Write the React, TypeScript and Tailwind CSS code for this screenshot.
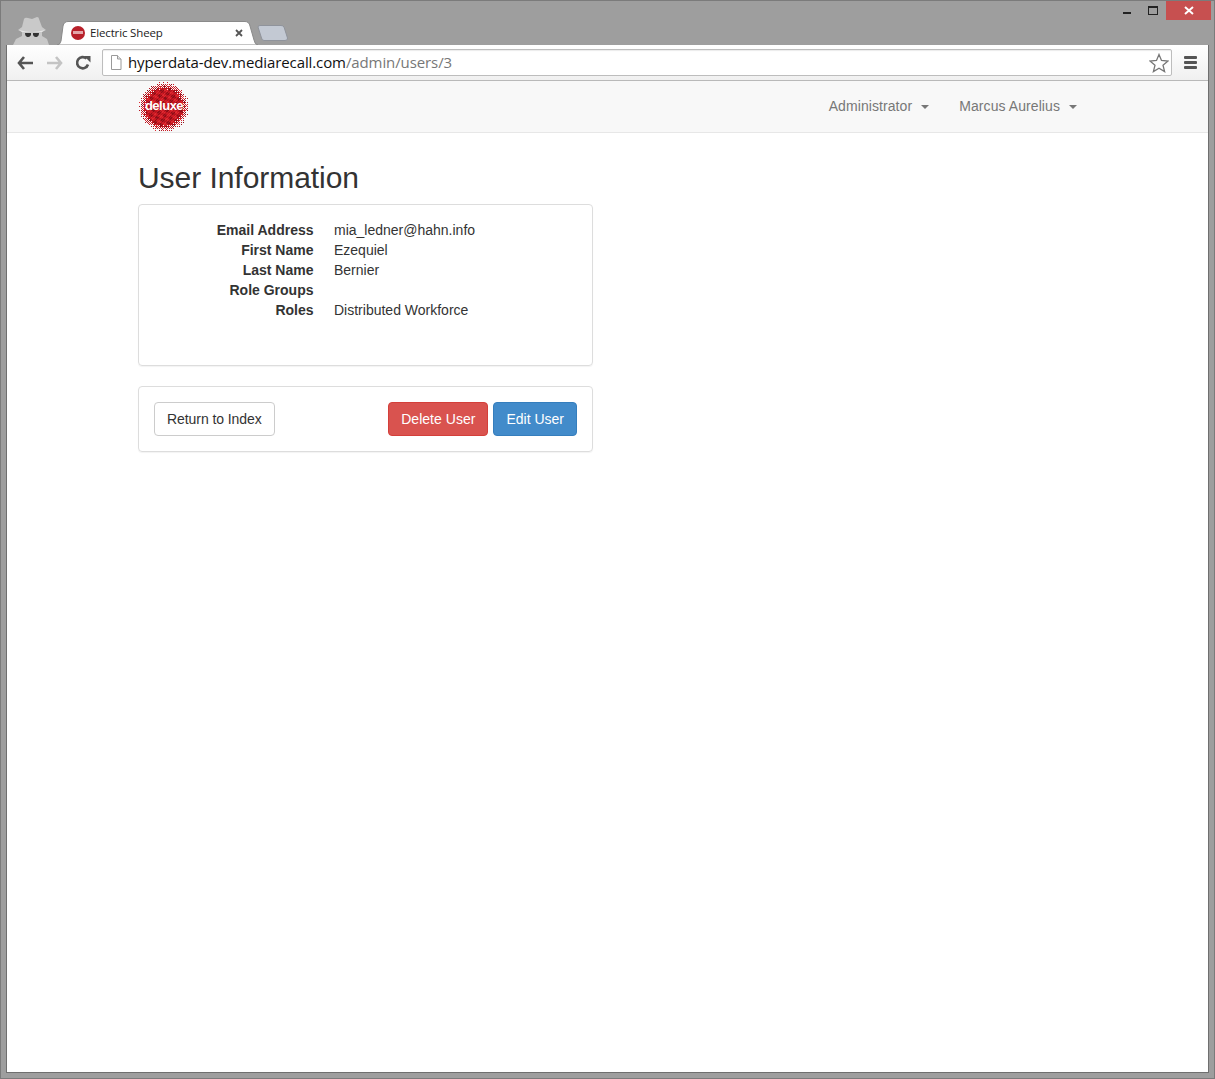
const bayer = [
  [0, 8, 2, 10],
  [12, 4, 14, 6],
  [3, 11, 1, 9],
  [15, 7, 13, 5],
];

// halftone disc: ordered dither thins the pixels out towards the rim
const dots: { x: number; y: number; c: string }[] = [];
for (let y = 0; y < 50; y++) {
  for (let x = 0; x < 50; x++) {
    const d = Math.hypot(x + 0.5 - 25, y + 0.5 - 25);
    const cover = Math.min(1, (25.5 - d) / 8);
    if (cover <= 0 || (bayer[y % 4][x % 4] + 0.5) / 16 > cover) continue;
    const m = Math.sin(x * 0.9 + y * 0.4) + Math.sin(y * 1.1 - x * 0.5) + Math.sin((x + y) * 2.3);
    const c = m > 1.2 ? "#e02a30" : m > 0 ? "#cc1a24" : m > -1.2 ? "#b4141e" : "#8c0f18";
    dots.push({ x, y, c });
  }
}

function DeluxeLogo() {
  return (
    <div className="relative ml-[1px] h-[50px] w-[50px]">
      <svg width="50" height="50" viewBox="0 0 50 50" shapeRendering="crispEdges">
        {dots.map((d, i) => (
          <rect key={i} x={d.x} y={d.y} width="1" height="1" fill={d.c} />
        ))}
      </svg>
      <span className="absolute inset-x-0 top-[16px] text-center text-[13px] leading-[16px] font-bold tracking-[-0.5px] text-white">
        deluxe
      </span>
    </div>
  );
}

function SpyIcon() {
  return (
    <svg width="38" height="30" viewBox="0 0 38 30">
      <path d="M0 30 L3 24 L9 21 L9 17 L5 15 L9 12 L11 4 Q12 2 15 3 L19 4 L24 2 Q26 2 26 4 L29 12 L33 15 L29 17 L29 21 L34 24 L36 30 Z" fill="#c9c9c9" />
      <path d="M6 15 Q19 19 32 15 L29 17 L9 17 Z" fill="#e6e6e6" />
      <path d="M12 18 L18 18 L18 20 Q17 22.5 14.5 22 Q12 21.5 12 18 Z M20 18 L26 18 Q26 21.5 23.5 22 Q21 22.5 20 20 Z" fill="#333" />
    </svg>
  );
}

function Tab() {
  return (
    <div className="relative h-[24px] w-[201px]">
      <svg className="absolute inset-0" width="201" height="24" viewBox="0 0 201 24">
        <path d="M0 24 Q3 24 4 20 L6 5 Q7 0.5 11 0.5 L188 0.5 Q192 0.5 193 5 L197 19 Q198 24 201 24 Z" fill="#fff" stroke="#8a8a8a" />
      </svg>
      <div className="relative flex h-full items-center pl-[14px] pr-[15px] pb-[1px]">
        <span className="flex h-[14px] w-[14px] items-center justify-center rounded-full bg-[#b8202a]">
          <span className="h-[3px] w-[10px] bg-white/60" />
        </span>
        <span className="ml-[5px] font-['Open_Sans',sans-serif] text-[11.5px] tracking-[-0.15px] text-[#222]">Electric Sheep</span>
        <svg className="ml-auto" width="8" height="8" viewBox="0 0 8 8">
          <path d="M1 1 L7 7 M7 1 L1 7" stroke="#555" strokeWidth="1.8" />
        </svg>
      </div>
    </div>
  );
}

function Toolbar() {
  return (
    <div className="flex h-[36px] items-center rounded-t-[3px] border-b border-[#b9b9b9] bg-gradient-to-b from-white to-[#f0f0f0] pl-[10px] pr-[11px]">
      <svg width="17" height="14" viewBox="0 0 17 14">
        <path d="M7 1 L2 7 L7 13 M2 7 L16 7" fill="none" stroke="#555" strokeWidth="2.6" />
      </svg>
      <svg className="ml-[12px]" width="17" height="14" viewBox="0 0 17 14">
        <path d="M10 1 L15 7 L10 13 M15 7 L1 7" fill="none" stroke="#c4c4c4" strokeWidth="2.6" />
      </svg>
      <svg className="ml-[12px]" width="16" height="16" viewBox="0 0 16 16">
        <path d="M13 9.5 A5.6 5.6 0 1 1 11.5 3.6" fill="none" stroke="#555" strokeWidth="2.6" />
        <path d="M9 1 L15.5 1 L15.5 7.5 Z" fill="#555" />
      </svg>
      <div className="ml-[11px] flex h-[27px] w-[1070px] items-center rounded-[2px] border border-[#bdbdbd] bg-white pl-[7px] pr-[2px] shadow-[inset_0_1px_1px_rgba(0,0,0,0.08)]">
        <svg width="12" height="15" viewBox="0 0 12 15">
          <path d="M1.5 0.5 L7.5 0.5 L11 4 L11 14.5 L1.5 14.5 Z" fill="#fff" stroke="#9a9a9a" />
          <path d="M7.5 0.5 L7.5 4 L11 4" fill="#e5e5e5" stroke="#9a9a9a" />
        </svg>
        <span className="ml-[6px] font-['Open_Sans',sans-serif] text-[15px] tracking-[-0.1px] text-[#111]">
          hyperdata-dev.mediarecall.com<span className="text-[#777]">/admin/users/3</span>
        </span>
        <svg className="ml-auto" width="20" height="20" viewBox="0 0 20 20">
          <path d="M10 1.5 L12.5 7.5 L19 8 L14 12.2 L15.6 18.6 L10 15.2 L4.4 18.6 L6 12.2 L1 8 L7.5 7.5 Z" fill="#fff" stroke="#777" strokeWidth="1.3" />
        </svg>
      </div>
      <div className="ml-[12px] flex flex-col gap-[2px]">
        <span className="h-[3px] w-[13px] rounded-[1px] bg-[#555]" />
        <span className="h-[3px] w-[13px] rounded-[1px] bg-[#555]" />
        <span className="h-[3px] w-[13px] rounded-[1px] bg-[#555]" />
      </div>
    </div>
  );
}

function NavMenu({ label }: { label: string }) {
  return (
    <span className="flex items-center text-[14px] tracking-[0.08px] text-[#777]">
      {label}
      <span className="ml-[9px] h-0 w-0 border-x-[4px] border-t-[4px] border-x-transparent border-t-[#777]" />
    </span>
  );
}

const rows: [string, string][] = [
  ["Email Address", "mia_ledner@hahn.info"],
  ["First Name", "Ezequiel"],
  ["Last Name", "Bernier"],
  ["Role Groups", ""],
  ["Roles", "Distributed Workforce"],
];

export default function App() {
  return (
    <div className="flex h-[1079px] w-[1215px] flex-col border border-[#7b7b7b] bg-[#9e9e9e] font-['Liberation_Sans',Arial,sans-serif] text-[14px] text-[#333]">
      <div className="flex h-[44px] shrink-0 items-end pl-[12px]">
        <SpyIcon />
        <div className="ml-[6px]">
          <Tab />
        </div>
        <svg className="-ml-[1px] mb-[4px]" width="31" height="16" viewBox="0 0 31 16">
          <path d="M3 0.5 L24 0.5 Q26 0.5 27 2 L30.5 13 Q31 15.5 28 15.5 L7 15.5 Q5 15.5 4.5 13 L1 2 Q1 0.5 3 0.5 Z" fill="#c3c9d3" stroke="#8f939b" />
        </svg>
        <div className="ml-auto mr-[3px] flex h-[19px] self-start">
          <div className="flex w-[26px] items-center justify-center pr-[1px]">
            <span className="mt-[5px] h-[2px] w-[8px] bg-[#222]" />
          </div>
          <div className="flex w-[26px] items-center justify-center">
            <span className="h-[9px] w-[10px] border border-t-[2px] border-[#222]" />
          </div>
          <div className="flex w-[45px] items-center justify-center bg-[#c75050]">
            <svg width="10" height="9" viewBox="0 0 10 9">
              <path d="M1 1 L9 8 M9 1 L1 8" stroke="#fff" strokeWidth="2" />
            </svg>
          </div>
        </div>
      </div>
      <div className="mx-[5px] mb-[5px] flex flex-1 flex-col border border-t-0 border-[#6f6f6f] bg-white">
        <Toolbar />
        <div className="flex h-[52px] shrink-0 items-center border-b border-[#e7e7e7] bg-[#f8f8f8] pl-[131px] pr-[131px]">
          <DeluxeLogo />
          <div className="ml-auto flex items-center gap-[30px]">
            <NavMenu label="Administrator" />
            <NavMenu label="Marcus Aurelius" />
          </div>
        </div>
        <div className="w-[586px] pl-[131px]">
          <h2 className="mt-[28px] text-[30px] leading-[33px] font-normal tracking-[-0.05px]">User Information</h2>
          <div className="mt-[10px] h-[162px] rounded-[4px] border border-[#ddd] pt-[15px] shadow-[0_1px_1px_rgba(0,0,0,0.05)]">
            {rows.map(([k, v]) => (
              <div key={k} className="flex h-[20px] leading-[20px]">
                <div className="w-[174.5px] text-right font-bold">{k}</div>
                <div className="ml-[20.5px]">{v}</div>
              </div>
            ))}
          </div>
          <div className="mt-[20px] flex h-[66px] items-center rounded-[4px] border border-[#ddd] px-[15px] shadow-[0_1px_1px_rgba(0,0,0,0.05)]">
            <button className="h-[34px] rounded-[4px] border border-[#ccc] bg-white px-[12px] tracking-[-0.07px]">Return to Index</button>
            <button className="ml-auto h-[34px] rounded-[4px] border border-[#d43f3a] bg-[#d9534f] px-[12px] tracking-[0.03px] text-white">Delete User</button>
            <button className="ml-[5px] h-[34px] rounded-[4px] border border-[#357ebd] bg-[#428bca] px-[12px] text-white">Edit User</button>
          </div>
        </div>
      </div>
    </div>
  );
}
